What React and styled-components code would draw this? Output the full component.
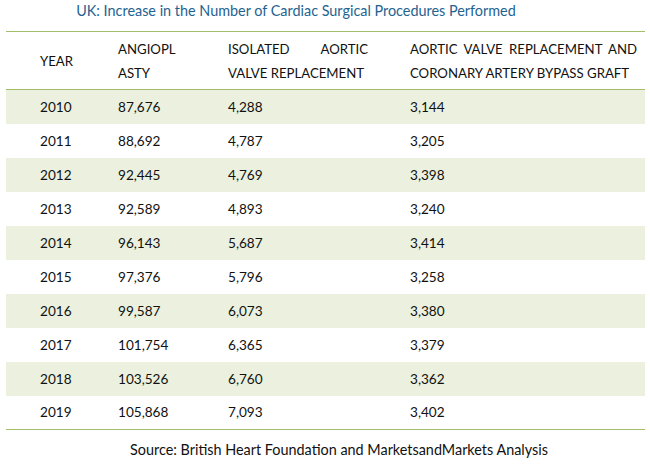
import React from 'react';
import styled, { createGlobalStyle } from 'styled-components';

const GlobalStyle = createGlobalStyle`
    html, body {
        margin: 0;
        padding: 0;
        background: #ffffff;
    }
    body {
        font-family: 'Lato', 'Open Sans', sans-serif;
        color: #111111;
    }
`;

const Page = styled.div`
    width: 650px;
    height: 466px;
    background: #ffffff;
    overflow: hidden;
`;

const Title = styled.div`
    height: 31px;
    padding-right: 58px;
    text-align: center;
    font-size: 14.4px;
    line-height: 21px;
    color: #1f6391;
`;

const Table = styled.table`
    width: 639px;
    margin-left: 6px;
    border-collapse: collapse;
    table-layout: fixed;
    font-size: 13.6px;
    color: #111111;
    border-top: 1px solid #a4bd6a;
    border-bottom: 1px solid #a4bd6a;
`;

const HeadRow = styled.tr`
    height: 58px;
    border-bottom: 1px solid #a4bd6a;
    font-size: 13.2px;
`;

const Row = styled.tr`
    height: 34px;
    background: ${(p) => (p.$shaded ? '#ebf1de' : '#ffffff')};
`;

const Cell = styled.td`
    padding: 0 ${(p) => p.$right || 0}px 0 ${(p) => p.$left || 6}px;
    vertical-align: middle;
    line-height: 24px;
    text-align: left;
    font-weight: normal;
`;

const HeadCell = styled(Cell).attrs({ as: 'th' })``;

const Line = styled.div`
    text-align: ${(p) => (p.$justify ? 'justify' : 'left')};
    text-align-last: ${(p) => (p.$justify ? 'justify' : 'left')};
    white-space: nowrap;
`;

const Source = styled.div`
    padding-left: 28px;
    padding-top: 10px;
    text-align: center;
    font-size: 14.4px;
    line-height: 20px;
    color: #111111;
`;

const columns = [
    { width: 106, left: 34, right: 0 },
    { width: 110, left: 6, right: 0 },
    { width: 182, left: 6, right: 36 },
    { width: 241, left: 6, right: 8 },
];

const data = [
    ['2010', '87,676', '4,288', '3,144'],
    ['2011', '88,692', '4,787', '3,205'],
    ['2012', '92,445', '4,769', '3,398'],
    ['2013', '92,589', '4,893', '3,240'],
    ['2014', '96,143', '5,687', '3,414'],
    ['2015', '97,376', '5,796', '3,258'],
    ['2016', '99,587', '6,073', '3,380'],
    ['2017', '101,754', '6,365', '3,379'],
    ['2018', '103,526', '6,760', '3,362'],
    ['2019', '105,868', '7,093', '3,402'],
];

export default function App() {
    return (
        <Page>
            <GlobalStyle />
            <Title>UK: Increase in the Number of Cardiac Surgical Procedures Performed</Title>
            <Table>
                <colgroup>
                    {columns.map((c, i) => (
                        <col key={i} style={{ width: c.width }} />
                    ))}
                </colgroup>
                <thead>
                    <HeadRow>
                        <HeadCell $left={columns[0].left}>YEAR</HeadCell>
                        <HeadCell $left={columns[1].left}>
                            <Line>ANGIOPL</Line>
                            <Line>ASTY</Line>
                        </HeadCell>
                        <HeadCell $left={columns[2].left} $right={columns[2].right}>
                            <Line $justify>ISOLATED AORTIC</Line>
                            <Line>VALVE REPLACEMENT</Line>
                        </HeadCell>
                        <HeadCell $left={columns[3].left} $right={columns[3].right}>
                            <Line $justify>AORTIC VALVE REPLACEMENT AND</Line>
                            <Line>CORONARY ARTERY BYPASS GRAFT</Line>
                        </HeadCell>
                    </HeadRow>
                </thead>
                <tbody>
                    {data.map((row, i) => (
                        <Row key={row[0]} $shaded={i % 2 === 0}>
                            {row.map((v, j) => (
                                <Cell key={j} $left={columns[j].left} $right={columns[j].right}>
                                    {v}
                                </Cell>
                            ))}
                        </Row>
                    ))}
                </tbody>
            </Table>
            <Source>Source: British Heart Foundation and MarketsandMarkets Analysis</Source>
        </Page>
    );
}
